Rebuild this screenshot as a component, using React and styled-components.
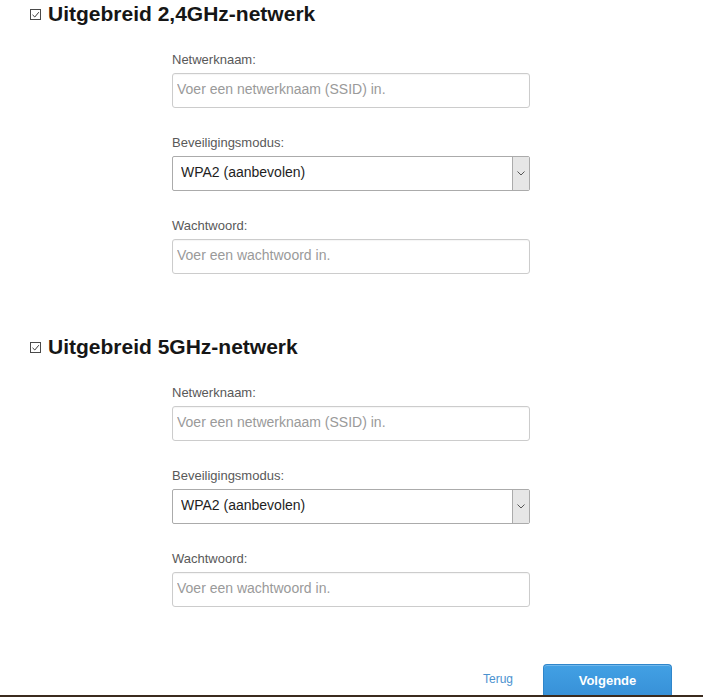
import React from "react";
import styled, { createGlobalStyle } from "styled-components";

const Global = createGlobalStyle`
  html, body {
    margin: 0;
    padding: 0;
    background: #ffffff;
    font-family: "Liberation Sans", Arial, sans-serif;
    overflow: hidden;
  }
  * { box-sizing: border-box; }
`;

const Page = styled.div`
  width: 703px;
  height: 697px;
  display: flex;
  flex-direction: column;
  padding-top: 1.5px;
`;

const Sections = styled.div`
  display: flex;
  flex-direction: column;
  gap: 61px;
`;

const Section = styled.section`
  display: flex;
  flex-direction: column;
`;

const Heading = styled.h2`
  margin: 0;
  padding-left: 29px;
  height: 24px;
  display: flex;
  align-items: center;
  gap: 6px;
  font-size: 21px;
  line-height: 24px;
  font-weight: bold;
  color: #161616;
  svg { margin-top: 2px; flex: none; }
`;

const Fields = styled.div`
  margin-top: 25px;
  margin-left: 172px;
  width: 358px;
  display: flex;
  flex-direction: column;
  gap: 26px;
`;

const Field = styled.div`
  display: flex;
  flex-direction: column;
  gap: 4px;
`;

const Label = styled.label`
  font-size: 13px;
  line-height: 18px;
  color: #595959;
`;

const TextInput = styled.input`
  height: 35px;
  width: 100%;
  border: 1px solid #cccccc;
  border-radius: 3px;
  padding: 0 4px 2px;
  font-family: inherit;
  font-size: 14px;
  color: #222;
  background: #fff;
  box-shadow: inset 0 1px 1px rgba(0, 0, 0, 0.04);
  outline: none;
  &::placeholder { color: #9a9a9a; }
`;

const SelectBox = styled.div`
  height: 35px;
  display: flex;
  border: 1px solid #ababab;
  border-radius: 2px;
  background: #fff;
`;

const NativeSelect = styled.select`
  flex: 1;
  appearance: none;
  -webkit-appearance: none;
  border: none;
  background: transparent;
  padding: 0 8px 2px;
  font-family: inherit;
  font-size: 14px;
  color: #1e1e1e;
  outline: none;
`;

const ArrowBox = styled.div`
  width: 17px;
  flex: none;
  background: #e6e6e6;
  border-left: 1px solid #ababab;
  display: flex;
  align-items: center;
  justify-content: center;
`;

const Actions = styled.div`
  margin-top: 57.5px;
  display: flex;
  justify-content: flex-end;
  align-items: flex-start;
  padding-right: 31px;
  gap: 30px;
`;

const LinkButton = styled.a`
  font-size: 12px;
  line-height: 31px;
  color: #4b92cf;
  text-decoration: none;
  cursor: pointer;
`;

const PrimaryButton = styled.button`
  width: 129px;
  height: 31px;
  border: 1px solid #2f86cb;
  border-bottom: none;
  border-radius: 4px 4px 0 0;
  background: linear-gradient(#42a0e4, #3891d8);
  box-shadow: inset 0 1px 0 rgba(255, 255, 255, 0.25);
  color: #ffffff;
  font-family: inherit;
  font-weight: bold;
  font-size: 13px;
  line-height: 29px;
  padding: 0;
  cursor: pointer;
`;

const Footer = styled.div`
  height: 2px;
  background: #3b2b1e;
  margin-top: auto;
`;

const CheckIcon = () => (
  <svg width="13" height="13" viewBox="0 0 13 13">
    <rect x="1.5" y="1.5" width="10" height="10" fill="#fff" stroke="#4a4a4a" strokeWidth="1" />
    <path d="M3.5 6.8 L5.8 9 L9.8 4.2" fill="none" stroke="#3a3a3a" strokeWidth="1" />
  </svg>
);

const Chevron = () => (
  <svg width="8" height="5" viewBox="0 0 8 5">
    <path d="M0.5 0.5 L4 4 L7.5 0.5" fill="none" stroke="#555" strokeWidth="1" />
  </svg>
);

const NetworkSection = ({ title, id }) => (
  <Section>
    <Heading>
      <CheckIcon />
      {title}
    </Heading>
    <Fields>
      <Field>
        <Label htmlFor={`${id}-ssid`}>Netwerknaam:</Label>
        <TextInput id={`${id}-ssid`} placeholder="Voer een netwerknaam (SSID) in." />
      </Field>
      <Field>
        <Label htmlFor={`${id}-mode`}>Beveiligingsmodus:</Label>
        <SelectBox>
          <NativeSelect id={`${id}-mode`} defaultValue="wpa2">
            <option value="wpa2">WPA2 (aanbevolen)</option>
          </NativeSelect>
          <ArrowBox>
            <Chevron />
          </ArrowBox>
        </SelectBox>
      </Field>
      <Field>
        <Label htmlFor={`${id}-pw`}>Wachtwoord:</Label>
        <TextInput id={`${id}-pw`} placeholder="Voer een wachtwoord in." />
      </Field>
    </Fields>
  </Section>
);

export default function App() {
  return (
    <>
      <Global />
      <Page>
        <Sections>
          <NetworkSection id="n24" title="Uitgebreid 2,4GHz-netwerk" />
          <NetworkSection id="n5" title="Uitgebreid 5GHz-netwerk" />
        </Sections>
        <Actions>
          <LinkButton>Terug</LinkButton>
          <PrimaryButton>Volgende</PrimaryButton>
        </Actions>
        <Footer />
      </Page>
    </>
  );
}
